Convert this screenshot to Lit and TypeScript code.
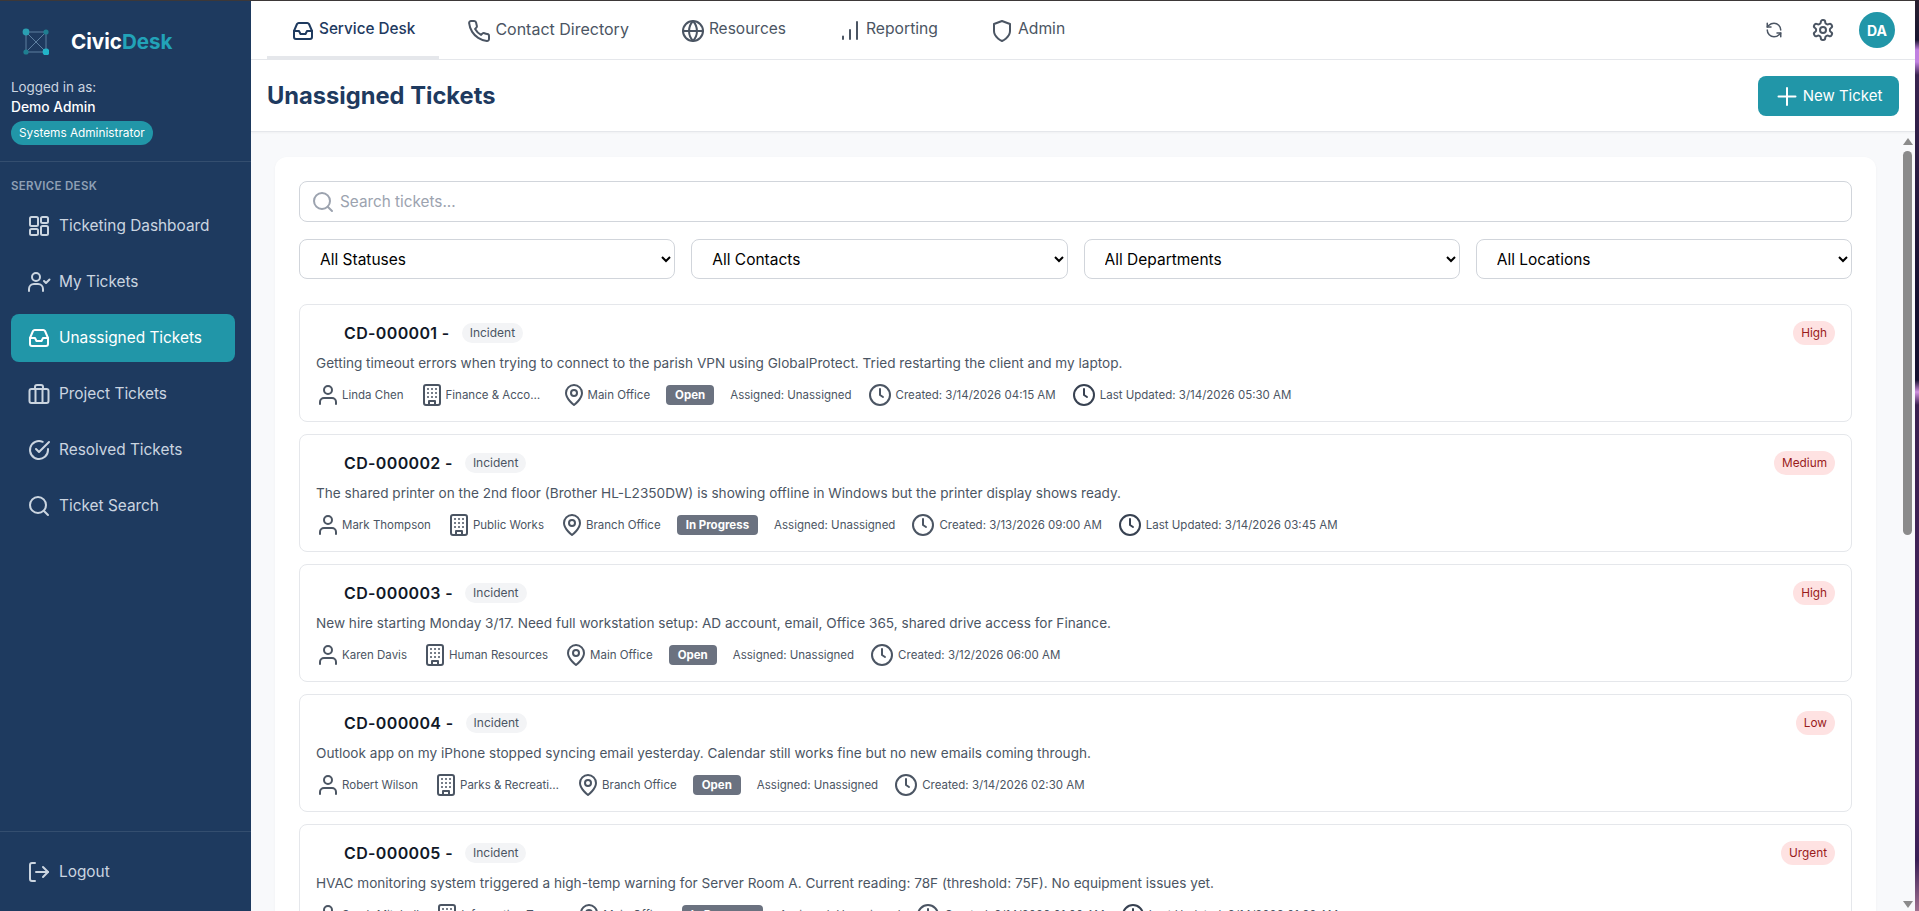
import { LitElement, html, css, svg } from "lit";
import { customElement } from "lit/decorators.js";

const I: Record<string, unknown> = {
  inbox: svg`<path d="M3 12l3-7a2 2 0 0 1 1.8-1h8.4a2 2 0 0 1 1.8 1l3 7v6a2 2 0 0 1-2 2H5a2 2 0 0 1-2-2z"/><path d="M3 12h5l1.5 3h5l1.5-3h5"/>`,
  dash: svg`<rect x="3" y="3" width="8" height="9" rx="1.5"/><rect x="3" y="15" width="8" height="6" rx="1.5"/><rect x="14" y="3" width="7" height="6" rx="1.5"/><rect x="14" y="12" width="7" height="9" rx="1.5"/>`,
  usercheck: svg`<circle cx="9" cy="7" r="4"/><path d="M2 21v-2a5 5 0 0 1 5-5h4a5 5 0 0 1 5 5v2"/><path d="M17 11l2 2 3.5-3.5"/>`,
  case: svg`<rect x="2.5" y="7" width="19" height="14" rx="2"/><path d="M8 7V5a2 2 0 0 1 2-2h4a2 2 0 0 1 2 2v2"/><path d="M8.5 7v14M15.5 7v14"/>`,
  check: svg`<path d="M21 11.1V12a9 9 0 1 1-5.3-8.2"/><path d="M9 11l3 3L22 4"/>`,
  search: svg`<circle cx="11" cy="11" r="8"/><path d="M21 21l-4.3-4.3"/>`,
  logout: svg`<path d="M8 21H5a2 2 0 0 1-2-2V5a2 2 0 0 1 2-2h3"/><path d="M16 17l5-5-5-5"/><path d="M21 12H9"/>`,
  phone: svg`<path d="M22 16.92v3a2 2 0 0 1-2.18 2 19.79 19.79 0 0 1-8.63-3.07 19.5 19.5 0 0 1-6-6 19.79 19.79 0 0 1-3.07-8.67A2 2 0 0 1 4.11 2h3a2 2 0 0 1 2 1.72 12.84 12.84 0 0 0 .7 2.81 2 2 0 0 1-.45 2.11L8.09 9.91a16 16 0 0 0 6 6l1.27-1.27a2 2 0 0 1 2.11-.45 12.84 12.84 0 0 0 2.81.7A2 2 0 0 1 22 16.92z"/>`,
  globe: svg`<circle cx="12" cy="12" r="10"/><path d="M2 12h20"/><path d="M12 2a15.3 15.3 0 0 1 4 10 15.3 15.3 0 0 1-4 10 15.3 15.3 0 0 1-4-10 15.3 15.3 0 0 1 4-10z"/>`,
  bars: svg`<path d="M5 20v-2.5M12 20v-9M19 20V3"/>`,
  shield: svg`<path d="M12 22s8-3.5 8-10V5l-8-3-8 3v7c0 6.5 8 10 8 10z"/>`,
  refresh: svg`<path d="M21 12a9 9 0 0 0-9-9 9.75 9.75 0 0 0-6.74 2.74L3 8"/><path d="M3 3v5h5"/><path d="M3 12a9 9 0 0 0 9 9 9.75 9.75 0 0 0 6.74-2.74L21 16"/><path d="M16 16h5v5"/>`,
  gear: svg`<path d="M12.22 2h-.44a2 2 0 0 0-2 2v.18a2 2 0 0 1-1 1.73l-.43.25a2 2 0 0 1-2 0l-.15-.08a2 2 0 0 0-2.73.73l-.22.38a2 2 0 0 0 .73 2.73l.15.1a2 2 0 0 1 1 1.72v.51a2 2 0 0 1-1 1.74l-.15.09a2 2 0 0 0-.73 2.73l.22.38a2 2 0 0 0 2.73.73l.15-.08a2 2 0 0 1 2 0l.43.25a2 2 0 0 1 1 1.73V20a2 2 0 0 0 2 2h.44a2 2 0 0 0 2-2v-.18a2 2 0 0 1 1-1.73l.43-.25a2 2 0 0 1 2 0l.15.08a2 2 0 0 0 2.73-.73l.22-.39a2 2 0 0 0-.73-2.73l-.15-.08a2 2 0 0 1-1-1.74v-.5a2 2 0 0 1 1-1.74l.15-.09a2 2 0 0 0 .73-2.73l-.22-.38a2 2 0 0 0-2.73-.73l-.15.08a2 2 0 0 1-2 0l-.43-.25a2 2 0 0 1-1-1.73V4a2 2 0 0 0-2-2z"/><circle cx="12" cy="12" r="3"/>`,
  plus: svg`<path d="M12 4v17M3.5 12.5h17"/>`,
  person: svg`<circle cx="12" cy="7" r="4"/><path d="M20 21v-2a4 4 0 0 0-4-4H8a4 4 0 0 0-4 4v2"/>`,
  building: svg`<rect x="4" y="2" width="16" height="20" rx="2"/><path d="M9 22v-4h6v4"/><path d="M8 6h.01M12 6h.01M16 6h.01M8 10h.01M12 10h.01M16 10h.01M8 14h.01M12 14h.01M16 14h.01"/>`,
  pin: svg`<path d="M20 10c0 6-8 12-8 12s-8-6-8-12a8 8 0 0 1 16 0Z"/><circle cx="12" cy="10" r="3"/>`,
  clock: svg`<circle cx="12" cy="12" r="10"/><path d="M12 6v6l3 2"/>`,
};

const icon = (name: string, cls = "") =>
  html`<svg class="ic ${cls}" viewBox="0 0 24 24" fill="none" stroke="currentColor" stroke-width="2" stroke-linecap="round" stroke-linejoin="round" aria-hidden="true">${I[name]}</svg>`;

const sideNav = [
  ["dash", "Ticketing Dashboard"],
  ["usercheck", "My Tickets"],
  ["inbox", "Unassigned Tickets"],
  ["case", "Project Tickets"],
  ["check", "Resolved Tickets"],
  ["search", "Ticket Search"],
];
const tabs = [
  ["inbox", "Service Desk"],
  ["phone", "Contact Directory"],
  ["globe", "Resources"],
  ["bars", "Reporting"],
  ["shield", "Admin"],
];

interface Ticket {
  id: string; pri: string; text: string; who: string; dept: string; loc: string;
  status: string; created: string; updated?: string;
}
const tickets: Ticket[] = [
  { id: "CD-000001", pri: "High", text: "Getting timeout errors when trying to connect to the parish VPN using GlobalProtect. Tried restarting the client and my laptop.", who: "Linda Chen", dept: "Finance & Accounting", loc: "Main Office", status: "Open", created: "3/14/2026 04:15 AM", updated: "3/14/2026 05:30 AM" },
  { id: "CD-000002", pri: "Medium", text: "The shared printer on the 2nd floor (Brother HL-L2350DW) is showing offline in Windows but the printer display shows ready.", who: "Mark Thompson", dept: "Public Works", loc: "Branch Office", status: "In Progress", created: "3/13/2026 09:00 AM", updated: "3/14/2026 03:45 AM" },
  { id: "CD-000003", pri: "High", text: "New hire starting Monday 3/17. Need full workstation setup: AD account, email, Office 365, shared drive access for Finance.", who: "Karen Davis", dept: "Human Resources", loc: "Main Office", status: "Open", created: "3/12/2026 06:00 AM" },
  { id: "CD-000004", pri: "Low", text: "Outlook app on my iPhone stopped syncing email yesterday. Calendar still works fine but no new emails coming through.", who: "Robert Wilson", dept: "Parks & Recreation", loc: "Branch Office", status: "Open", created: "3/14/2026 02:30 AM" },
  { id: "CD-000005", pri: "Urgent", text: "HVAC monitoring system triggered a high-temp warning for Server Room A. Current reading: 78F (threshold: 75F). No equipment issues yet.", who: "Sarah Mitchell", dept: "Information Technology", loc: "Main Office", status: "In Progress", created: "3/14/2026 01:00 AM", updated: "3/14/2026 01:30 AM" },
];

@customElement("app-root")
export class AppRoot extends LitElement {
  static styles = css`
    :host { display: block; font-family: Inter, "Liberation Sans", sans-serif; }
    * { box-sizing: border-box; }
    .frame { display: flex; width: 1919px; height: 911px; overflow: hidden; background: #1c1030; }
    .window { flex: 1; min-width: 0; display: flex; border-top: 1px solid #3d3838; background: #fff; }
    .wall { width: 4px; background: linear-gradient(#2a2030 0, #1a1530 40px, #c080e0 50px, #c080e0 62px, #3a2450 75px, #151030 300px, #151030 380px, #d090e0 392px, #3a2050 405px, #4a2560 780px, #3a1f55 860px, #a07090 911px); }

    .side { width: 251px; flex: none; background: #1e3a5f; display: flex; flex-direction: column; color: #fff; }
    .brand { height: 76px; padding: 4px 0 0 21px; display: flex; align-items: center; gap: 22px; }
    .logo { width: 28px; height: 28px; flex: none; }
    .wordmark { font-size: 20.6px; font-weight: 700; }
    .wordmark span { color: #22a3b8; }
    .user { padding: 0 11px 16px; border-bottom: 1px solid rgba(255,255,255,.1); line-height: 20px; }
    .user .l1 { color: #cbd5e0; font-size: 13.4px; }
    .user .l2 { font-weight: 500; font-size: 13.8px; }
    .role { display: inline-block; margin-top: 4px; height: 24px; line-height: 24px; padding: 0 8px; border-radius: 12px; background: #2196a8; font-size: 11.8px; }
    .label { padding: 16px 11px 8px; font-size: 11.5px; line-height: 16px; font-weight: 600; letter-spacing: .3px; color: #8fa0b5; }
    nav.items { display: flex; flex-direction: column; gap: 8px; margin: 0 16px 0 11px; }
    .item { height: 48px; padding: 0 16px; display: flex; align-items: center; gap: 8px; border-radius: 8px; font-size: 15.4px; color: #cbd5e0; }
    .item span { padding-bottom: 2px; }
    .item.on { background: #2196a8; color: #fff; }
    .foot { margin-top: auto; border-top: 1px solid rgba(255,255,255,.1); padding: 16px 16px 15px 11px; }

    .main { flex: 1; min-width: 0; display: flex; flex-direction: column; }
    .top { height: 59px; flex: none; border-bottom: 1px solid #e5e7eb; padding-left: 16px; display: flex; align-items: stretch; }
    .tabs { display: flex; gap: 4px; }
    .tab { padding: 4px 24px 0; display: flex; align-items: center; gap: 4px; font-size: 15.7px; color: #4b5563; border-bottom: 3px solid transparent; }
    .tab span { padding-bottom: 4px; }
    .tab.on { color: #1e3a5f; border-bottom-color: #e5e7eb; font-weight: 500; font-size: 15.3px; }
    .tab:nth-child(2) { font-size: 16px; }
    .tab:nth-child(3) { font-size: 15.5px; }
    .tools { margin-left: auto; display: flex; align-items: center; padding-right: 20px; color: #4b5563; }
    .tools .ic.r { width: 18px; height: 18px; }
    .tools .ic.g { width: 24px; height: 24px; margin-left: 28px; }
    .avatar { width: 36px; height: 36px; margin-left: 24px; border-radius: 50%; background: #2196a8; color: #fff; display: flex; align-items: center; justify-content: center; font-size: 14px; font-weight: 700; }
    .head { height: 72px; flex: none; border-bottom: 1px solid #e5e7eb; box-shadow: 0 1px 2px rgba(0,0,0,.04); padding: 0 16px; display: flex; align-items: center; justify-content: space-between; position: relative; z-index: 1; background: #fff; }
    h1 { margin: 0; font-size: 23.7px; font-weight: 700; color: #1e3a5f; }
    .new { width: 141px; height: 40px; border: 0; border-radius: 8px; background: #2196a8; color: #fff; font: inherit; font-size: 15px; display: flex; align-items: center; justify-content: center; gap: 4px; }

    .body { flex: 1; min-height: 0; display: flex; background: #f8f9fb; }
    .scroll { flex: 1; min-width: 0; overflow: hidden; padding: 25px 24px 24px; }
    .sbar { width: 15px; flex: none; display: flex; flex-direction: column; align-items: center; padding: 6px 0 3px; }
    .up { width: 0; height: 0; border: solid transparent; border-width: 0 5px 7px; border-bottom-color: #8b8b8b; }
    .thumb { width: 9px; height: 384px; margin-top: 6px; border-radius: 5px; background: #8b8b8b; }
    .down { width: 0; height: 0; margin-top: auto; border: solid transparent; border-width: 7px 5px 0; border-top-color: #8b8b8b; }

    .panel { background: #fff; border-radius: 12px; padding: 24px; box-shadow: 0 1px 3px rgba(0,0,0,.04); }
    .searchbox { position: relative; height: 41px; }
    .searchbox input { width: 100%; height: 100%; border: 1px solid #d1d5db; border-radius: 8px; padding: 0 12px 0 40px; font: inherit; font-size: 15.3px; background: #fff; outline: none; }
    .searchbox input::placeholder { color: #9ca3af; }
    .searchbox .ic { position: absolute; left: 12px; top: 9px; color: #9ca3af; }
    .filters { margin-top: 17px; display: grid; grid-template-columns: repeat(4, 1fr); gap: 16px; }
    select { height: 40px; border: 1px solid #d1d5db; border-radius: 8px; background: #fff; padding: 0 16px; font: inherit; font-size: 15.5px; color: #000; }
    .list { margin-top: 25px; display: flex; flex-direction: column; gap: 12px; }
    .card { height: 118px; border: 1px solid #e5e7eb; border-radius: 8px; padding: 16px 16px 14px; }
    .t1 { height: 24px; display: flex; align-items: center; padding-left: 28px; }
    .tid { font-size: 16px; letter-spacing: .35px; font-weight: 600; color: #111827; }
    .kind { margin-left: 12px; height: 20px; line-height: 20px; padding: 0 8px; border-radius: 10px; background: #f3f4f6; font-size: 12px; color: #4b5563; }
    .pri { margin-left: auto; height: 24px; line-height: 24px; padding: 0 8px; border-radius: 12px; background: #fee2e2; color: #991b1b; font-size: 11.8px; }
    .desc { margin-top: 8px; font-size: 13.6px; line-height: 20px; color: #4b5563; white-space: nowrap; }
    .meta { margin-top: 10px; height: 24px; display: flex; align-items: center; gap: 16px; font-size: 11.5px; color: #4b5563; white-space: nowrap; }
    .m { display: flex; align-items: center; gap: 2px; }
    .m.c { gap: 4px; }
    .m.u .ic { color: #374151; }
    .m .trunc { display: block; max-width: 100px; overflow: hidden; text-overflow: ellipsis; }
    .status { height: 20px; line-height: 20px; padding: 0 9px; border-radius: 4px; background: #6b7280; color: #fff; font-weight: 700; }
    .ic { width: 24px; height: 24px; flex: none; display: block; }
  `;

  render() {
    return html`<div class="frame">
      <div class="window">
        <aside class="side">
          <div class="brand">
            <svg class="logo" viewBox="0 0 28 28" aria-hidden="true">
              <g stroke="#5d7fa0" stroke-width="1" fill="none"><path d="M5 5h20v20H5zM5 5l20 20M25 5L5 25"/></g>
              <circle cx="5" cy="5" r="3.4" fill="#2a9fb2"/><circle cx="25" cy="5" r="2.6" fill="#1f7f91"/>
              <circle cx="5" cy="25" r="2.6" fill="#1f7f91"/><circle cx="25" cy="25" r="3.4" fill="#22b4c8"/>
            </svg>
            <div class="wordmark">Civic<span>Desk</span></div>
          </div>
          <div class="user">
            <div class="l1">Logged in as:</div>
            <div class="l2">Demo Admin</div>
            <div class="role">Systems Administrator</div>
          </div>
          <div class="label">SERVICE DESK</div>
          <nav class="items">
            ${sideNav.map(([ic, t]) => html`<div class="item ${t === "Unassigned Tickets" ? "on" : ""}">${icon(ic)}<span>${t}</span></div>`)}
          </nav>
          <div class="foot"><div class="item">${icon("logout")}<span>Logout</span></div></div>
        </aside>
        <div class="main">
          <header class="top">
            <nav class="tabs">
              ${tabs.map(([ic, t], i) => html`<div class="tab ${i === 0 ? "on" : ""}">${icon(ic)}<span>${t}</span></div>`)}
            </nav>
            <div class="tools">${icon("refresh", "r")}${icon("gear", "g")}<div class="avatar">DA</div></div>
          </header>
          <div class="head">
            <h1>Unassigned Tickets</h1>
            <button class="new">${icon("plus")}<span>New Ticket</span></button>
          </div>
          <div class="body">
            <div class="scroll">
              <section class="panel">
                <div class="searchbox">${icon("search")}<input placeholder="Search tickets..." /></div>
                <div class="filters">
                  <select><option>All Statuses</option></select>
                  <select><option>All Contacts</option></select>
                  <select><option>All Departments</option></select>
                  <select><option>All Locations</option></select>
                </div>
                <div class="list">
                  ${tickets.map((t) => html`<article class="card">
                    <div class="t1"><span class="tid">${t.id} -</span><span class="kind">Incident</span><span class="pri">${t.pri}</span></div>
                    <div class="desc">${t.text}</div>
                    <div class="meta">
                      <span class="m">${icon("person")}<span>${t.who}</span></span>
                      <span class="m">${icon("building")}<span class="trunc">${t.dept}</span></span>
                      <span class="m">${icon("pin")}<span>${t.loc}</span></span>
                      <span class="status">${t.status}</span>
                      <span>Assigned: Unassigned</span>
                      <span class="m c">${icon("clock")}<span>Created: ${t.created}</span></span>
                      ${t.updated ? html`<span class="m c u">${icon("clock")}<span>Last Updated: ${t.updated}</span></span>` : ""}
                    </div>
                  </article>`)}
                </div>
              </section>
            </div>
            <div class="sbar" aria-hidden="true"><div class="up"></div><div class="thumb"></div><div class="down"></div></div>
          </div>
        </div>
      </div>
      <div class="wall"></div>
    </div>`;
  }
}
